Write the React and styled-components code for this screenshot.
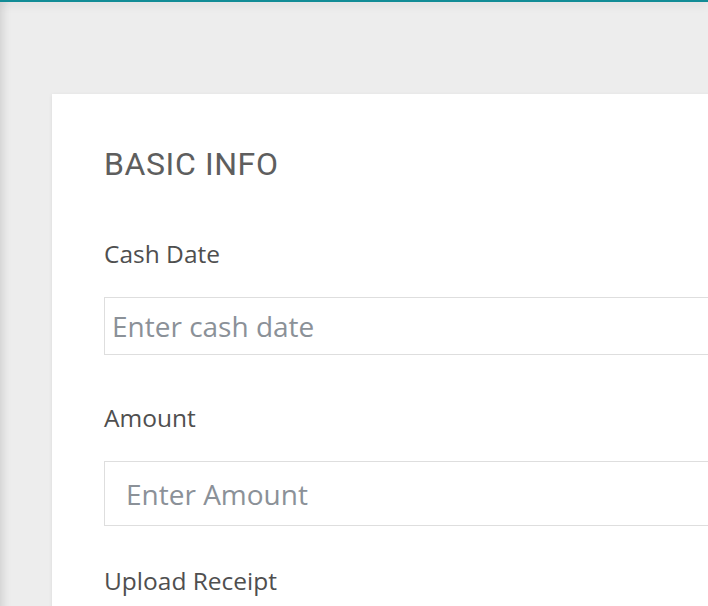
import React from "react";
import styled, { createGlobalStyle } from "styled-components";

const GlobalStyle = createGlobalStyle`
  html, body {
    margin: 0;
    padding: 0;
    background: #ededed;
    overflow: hidden;
  }
`;

const Page = styled.div`
  display: flex;
  flex-direction: column;
  width: 100vw;
  height: 100vh;
  overflow: hidden;
  background: #ededed;
`;

const TopBar = styled.div`
  height: 2px;
  flex-shrink: 0;
  background: #128c96;
  box-shadow: 0 2px 10px rgba(0, 0, 0, 0.18);
  position: relative;
  z-index: 2;
`;

const Main = styled.main`
  flex: 1;
  display: flex;
  padding: 92px 0 0 52px;
  box-shadow: inset 9px 0 9px -6px rgba(0, 0, 0, 0.12);
`;

const Card = styled.section`
  flex: 0 0 auto;
  width: 900px;
  background: #fff;
  box-shadow: 0 1px 4px rgba(0, 0, 0, 0.08);
  padding: 52px 52px 40px 52px;
  box-sizing: border-box;
`;

const Title = styled.h2`
  margin: 0;
  font-family: Roboto, "Liberation Sans", sans-serif;
  font-weight: 400;
  font-size: 32px;
  line-height: 36px;
  color: #5e5e5e;
  letter-spacing: 0.6px;
`;

const Field = styled.div`
  display: flex;
  flex-direction: column;
  margin-top: ${(p) => p.$top}px;
`;

const Label = styled.label`
  font-family: "Open Sans", "Liberation Sans", sans-serif;
  font-size: 24.5px;
  line-height: 32px;
  color: #4f4f4f;
  margin: 0 0 27px 0;
`;

const Input = styled.input`
  width: 100%;
  box-sizing: border-box;
  height: ${(p) => p.$height}px;
  padding: 0 ${(p) => p.$pad}px;
  border: 1px solid #dedede;
  border-radius: 0;
  outline: none;
  background: #fff;
  font-family: "Open Sans", "Liberation Sans", sans-serif;
  font-size: 28px;
  color: #444;

  &::placeholder {
    color: #8b9198;
  }
`;

export default function App() {
  return (
    <>
      <GlobalStyle />
      <Page>
        <TopBar />
        <Main>
          <Card>
            <Title>BASIC INFO</Title>
            <Field $top={56}>
              <Label>Cash Date</Label>
              <Input $height={58} $pad={7} placeholder="Enter cash date" />
            </Field>
            <Field $top={47}>
              <Label>Amount</Label>
              <Input $height={65} $pad={21} placeholder="Enter Amount" />
            </Field>
            <Field $top={39}>
              <Label>Upload Receipt</Label>
            </Field>
          </Card>
        </Main>
      </Page>
    </>
  );
}
